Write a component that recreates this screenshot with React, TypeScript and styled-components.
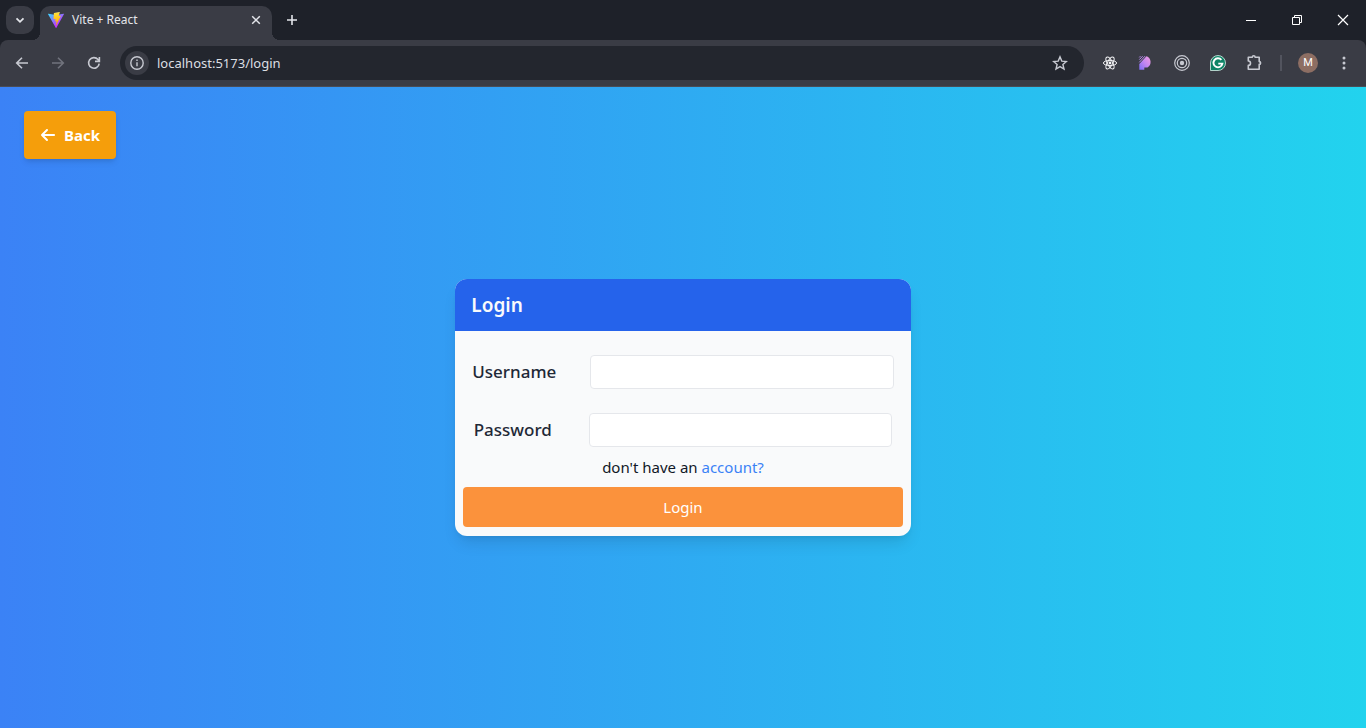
import React from "react";
import styled, { createGlobalStyle } from "styled-components";
import { FaArrowLeft } from "react-icons/fa6";

const GlobalStyle = createGlobalStyle`
  *, *::before, *::after { box-sizing: border-box; }
  body { margin: 0; font-family: "Segoe UI", "Noto Sans", "Open Sans", sans-serif; }
  button, input { font: inherit; color: inherit; }
  h1, p { margin: 0; }
`;

const Window = styled.div`
  display: flex;
  flex-direction: column;
  min-height: 100vh;
`;

const TabStrip = styled.header`
  display: flex;
  align-items: flex-end;
  height: 40px;
  padding-left: 6px;
  background: #1e2129;
  color: #e3e5ea;
`;

const TabSearch = styled.button`
  display: grid;
  place-items: center;
  width: 28px;
  height: 28px;
  margin: 0 6px 6px 0;
  padding: 0;
  border: 0;
  border-radius: 10px;
  background: #3a3c45;
`;

const Tab = styled.div`
  position: relative;
  display: flex;
  align-items: center;
  gap: 8px;
  width: 232px;
  height: 34px;
  padding: 0 8px 6px;
  border-radius: 10px 10px 0 0;
  background: #3a3c45;
  font-size: 12px;
  line-height: 16px;

  &::before, &::after {
    content: "";
    position: absolute;
    bottom: 0;
    width: 8px;
    height: 8px;
  }
  &::before {
    right: 100%;
    background: radial-gradient(circle at 0 0, transparent 8px, #3a3c45 8px);
  }
  &::after {
    left: 100%;
    background: radial-gradient(circle at 100% 0, transparent 8px, #3a3c45 8px);
  }
`;

const TabTitle = styled.span`
  flex: 1;
`;

const PlainButton = styled.button<{ $w: number; $h: number }>`
  display: grid;
  place-items: center;
  flex: none;
  width: ${(p) => p.$w}px;
  height: ${(p) => p.$h}px;
  padding: 0;
  border: 0;
  background: transparent;
`;

const NewTab = styled(PlainButton)`
  margin: 0 0 6px 6px;
`;

const WindowControls = styled.div`
  display: flex;
  align-self: flex-start;
  margin-left: auto;
  color: #fff;
`;

const ToolbarBack = styled.div`
  background: #1e2129;
`;

const Toolbar = styled.nav`
  display: flex;
  align-items: center;
  height: 47px;
  padding: 0 4px 1px;
  border-bottom: 1px solid #4a4c55;
  border-radius: 8px 8px 0 0;
  background: #3a3c45;
  color: #c7c9d1;
`;

const Omnibox = styled.div`
  display: flex;
  align-items: center;
  flex: 1;
  height: 34px;
  margin: 0 8px;
  padding: 0 6px 0 5px;
  border-radius: 17px;
  background: #23262e;
`;

const SiteInfo = styled(PlainButton)`
  border-radius: 50%;
  background: #3a3c45;
`;

const Address = styled.input`
  flex: 1;
  min-width: 0;
  padding: 0 8px;
  border: 0;
  outline: 0;
  background: transparent;
  color: #dcdee3;
  font-size: 13px;
  line-height: 20px;
`;

const Divider = styled.span`
  width: 2px;
  height: 16px;
  margin: 0 8px;
  background: #52545e;
`;

const Avatar = styled.span`
  display: grid;
  place-items: center;
  width: 20px;
  height: 20px;
  border-radius: 50%;
  background: #8d6e63;
  color: #fff;
  font-family: Roboto, sans-serif;
  font-size: 11px;
  line-height: 20px;
`;

const Page = styled.main`
  position: relative;
  display: flex;
  align-items: center;
  justify-content: center;
  flex: 1;
  background: linear-gradient(to right, #3b82f6, #22d3ee);
`;

const BackButton = styled.button`
  position: absolute;
  top: 24px;
  left: 24px;
  display: flex;
  align-items: center;
  gap: 8px;
  padding: 12px 16px;
  border: 0;
  border-radius: 4px;
  background: #f59e0b;
  box-shadow: 0 4px 6px -1px rgba(0, 0, 0, 0.1), 0 2px 4px -2px rgba(0, 0, 0, 0.1);
  color: #fff;
  font-size: 15px;
  font-weight: 700;
  line-height: 24px;
`;

const BackIcon = styled(FaArrowLeft)`
  width: 16px;
  height: 16px;
`;

const Card = styled.form`
  display: flex;
  flex-direction: column;
  width: calc(100% / 3);
  padding-bottom: 9px;
  overflow: hidden;
  border-radius: 12px;
  background: #f9fafb;
  box-shadow: 0 10px 15px -3px rgba(0, 0, 0, 0.1), 0 4px 6px -4px rgba(0, 0, 0, 0.1);
  color: #1f2937;
`;

const CardTitle = styled.h1`
  padding: 12px 16px;
  background: #2563eb;
  color: #f9fafb;
  font-size: 19px;
  font-weight: 600;
  line-height: 28px;
`;

const Fields = styled.div`
  display: flex;
  flex-direction: column;
  gap: 24px;
  padding: 24px 0 8px;
`;

const Field = styled.div`
  display: flex;
  align-items: center;
  justify-content: space-around;
`;

const Label = styled.label`
  font-size: 17px;
  font-weight: 500;
  line-height: 28px;
`;

const TextBox = styled.input`
  width: calc(100% * 2 / 3);
  height: 34px;
  padding: 4px 8px;
  border: 1px solid #e5e7eb;
  border-radius: 4px;
  background: #fff;
  font-size: 15px;
`;

const SignUpLine = styled.p`
  color: #111827;
  font-size: 15px;
  line-height: 24px;
  text-align: center;

  a {
    color: #3b82f6;
    text-decoration: none;
  }
`;

const SubmitButton = styled.button`
  margin: 8px 8px 0;
  padding: 8px;
  border: 0;
  border-radius: 4px;
  background: #fb923c;
  color: #fff;
  font-size: 15px;
  line-height: 24px;
`;

type IconProps = { size?: number; stroke?: number; children: React.ReactNode };

const Icon = ({ size = 16, stroke = 1.6, children }: IconProps) => (
  <svg width={size} height={size} viewBox={`0 0 ${size} ${size}`} fill="none" stroke="currentColor" strokeWidth={stroke} aria-hidden="true">
    {children}
  </svg>
);

const ViteLogo = () => (
  <svg width="16" height="16" viewBox="0 0 256 257" aria-hidden="true">
    <defs>
      <linearGradient id="viteBody" x1="-.8%" x2="57.6%" y1="7.7%" y2="78.4%">
        <stop offset="0%" stopColor="#41d1ff" />
        <stop offset="100%" stopColor="#bd34fe" />
      </linearGradient>
      <linearGradient id="viteBolt" x1="43.4%" x2="50.3%" y1="2.2%" y2="89%">
        <stop offset="0%" stopColor="#ffea83" />
        <stop offset="8.3%" stopColor="#ffdd35" />
        <stop offset="100%" stopColor="#ffa800" />
      </linearGradient>
    </defs>
    <path fill="url(#viteBody)" d="M255.153 37.938 134.897 252.976c-2.483 4.44-8.862 4.466-11.382.048L.875 37.958c-2.746-4.814 1.371-10.646 6.827-9.67l120.385 21.517a6.537 6.537 0 0 0 2.322-.004l117.867-21.483c5.438-.991 9.574 4.796 6.877 9.62Z" />
    <path fill="url(#viteBolt)" d="M185.432.063 96.44 17.501a3.268 3.268 0 0 0-2.634 3.014l-5.474 92.456a3.268 3.268 0 0 0 3.997 3.378l24.777-5.718c2.318-.535 4.413 1.507 3.936 3.838l-7.361 36.047c-.495 2.426 1.782 4.5 4.151 3.78l15.304-4.649c2.372-.72 4.652 1.36 4.15 3.788l-11.698 56.621c-.732 3.542 3.979 5.473 5.943 2.437l1.313-2.028 72.516-144.72c1.215-2.423-.88-5.186-3.54-4.672l-25.505 4.922c-2.396.462-4.435-1.77-3.759-4.114l16.646-57.705c.677-2.35-1.37-4.583-3.769-4.113Z" />
  </svg>
);

const ReactMark = () => (
  <svg width="16" height="16" viewBox="0 0 16 16" fill="none" stroke="#f4f4f6" strokeWidth="1" aria-hidden="true">
    <ellipse cx="8" cy="8" rx="6.6" ry="2.6" />
    <ellipse cx="8" cy="8" rx="6.6" ry="2.6" transform="rotate(60 8 8)" />
    <ellipse cx="8" cy="8" rx="6.6" ry="2.6" transform="rotate(120 8 8)" />
    <circle cx="8" cy="8" r="1.4" fill="#f4f4f6" stroke="none" />
  </svg>
);

const PestoMark = () => (
  <svg width="16" height="16" viewBox="0 0 16 16" aria-hidden="true">
    <defs>
      <linearGradient id="violetPink" x1="1" y1="0" x2="0" y2="1">
        <stop offset="0" stopColor="#f39be0" />
        <stop offset="0.5" stopColor="#c487f2" />
        <stop offset="1" stopColor="#7b6cf5" />
      </linearGradient>
    </defs>
    <path fill="url(#violetPink)" d="M1.300 9 8.500 1.200A6.300 6.300 0 0 1 9.500 12.500H6.300v2.300h-5Z" />
    <path stroke="#b98cf0" strokeWidth="1" d="M1.300 7.300 7 1.200M1.300 4.600 4.600 1.200M1.300 2.400 2.400 1.200" />
  </svg>
);

const GrammarlyMark = () => (
  <svg width="16" height="16" viewBox="0 0 16 16" aria-hidden="true">
    <path fill="#0e8466" stroke="#d7f0e8" strokeWidth=".8" d="M8 .5A7.5 7.5 0 1 1 8 15.5H.5V8A7.5 7.5 0 0 1 8 .5Z" />
    <path fill="none" stroke="#fff" strokeWidth="1.9" d="M11.4 4.9A4.5 4.5 0 1 0 12.4 8.6H8.3" />
  </svg>
);

const App = () => (
  <Window>
    <GlobalStyle />
    <TabStrip>
      <TabSearch type="button" aria-label="Search tabs">
        <Icon stroke={1.8}><path d="m4.5 6.3 3.5 3.5 3.5-3.5" /></Icon>
      </TabSearch>
      <Tab>
        <ViteLogo />
        <TabTitle>Vite + React</TabTitle>
        <PlainButton type="button" $w={16} $h={16} aria-label="Close tab">
          <Icon stroke={1.5}><path d="m4.2 4.2 7.6 7.6m0-7.6-7.6 7.6" /></Icon>
        </PlainButton>
      </Tab>
      <NewTab type="button" $w={28} $h={28} aria-label="New tab">
        <Icon><path d="M8 3v10M3 8h10" /></Icon>
      </NewTab>
      <WindowControls>
        <PlainButton type="button" $w={46} $h={40} aria-label="Minimize">
          <Icon stroke={1}><path d="M3 8.5h10" /></Icon>
        </PlainButton>
        <PlainButton type="button" $w={46} $h={40} aria-label="Restore">
          <Icon stroke={1}><path d="M3.5 5.5h7v7h-7ZM5.500 5.500v-2h7v7h-2" /></Icon>
        </PlainButton>
        <PlainButton type="button" $w={46} $h={40} aria-label="Close window">
          <Icon stroke={1.2}><path d="m3 3 10 10m0-10L3 13" /></Icon>
        </PlainButton>
      </WindowControls>
    </TabStrip>

    <ToolbarBack>
      <Toolbar>
        <PlainButton type="button" $w={36} $h={34} aria-label="Go back">
          <Icon><path d="M14 8H3m5-5.300L2.700 8 8 13.300" /></Icon>
        </PlainButton>
        <PlainButton type="button" $w={36} $h={34} aria-label="Go forward" disabled>
          <svg width="16" height="16" viewBox="0 0 16 16" fill="none" stroke="#71737d" strokeWidth="1.6" aria-hidden="true">
            <path d="M2 8h11M8 2.700 13.300 8 8 13.300" />
          </svg>
        </PlainButton>
        <PlainButton type="button" $w={36} $h={34} aria-label="Reload">
          <Icon><path d="M13.200 8.600A5.300 5.300 0 1 1 12 4.500l1.400 1.700M13.400 2v4.400H9" /></Icon>
        </PlainButton>
        <Omnibox>
          <SiteInfo type="button" $w={24} $h={24} aria-label="Site information">
            <Icon stroke={1.4}>
              <circle cx="8" cy="8" r="6.200" />
              <path d="M8 7.300v4M8 4.600v1.500" />
            </Icon>
          </SiteInfo>
          <Address aria-label="Address" defaultValue="localhost:5173/login" />
          <PlainButton type="button" $w={36} $h={34} aria-label="Bookmark this page">
            <Icon stroke={1.4}>
              <path d="m8 1.900 1.800 4.200 4.600.4-3.500 3 1.100 4.500L8 11.600 4 14l1.100-4.500-3.500-3 4.600-.4Z" />
            </Icon>
          </PlainButton>
        </Omnibox>
        <PlainButton type="button" $w={36} $h={34} aria-label="React Developer Tools"><ReactMark /></PlainButton>
        <PlainButton type="button" $w={36} $h={34} aria-label="Color extension"><PestoMark /></PlainButton>
        <PlainButton type="button" $w={36} $h={34} aria-label="Recorder extension">
          <Icon stroke={1.2}>
            <circle cx="8" cy="8" r="7.300" />
            <circle cx="8" cy="8" r="4.700" />
            <circle cx="8" cy="8" r="2.200" fill="currentColor" stroke="none" />
          </Icon>
        </PlainButton>
        <PlainButton type="button" $w={36} $h={34} aria-label="Grammarly"><GrammarlyMark /></PlainButton>
        <PlainButton type="button" $w={36} $h={34} aria-label="Extensions">
          <Icon size={18} stroke={1.600}>
            <path strokeLinejoin="round" d="M3.300 3.200h4a1.400 1.400 0 0 1 2.800 0h4.100v4.400a1.400 1.400 0 0 1 0 2.800v4.800H3.300v-3.800a2.200 2.200 0 0 0 0-4.400Z" />
          </Icon>
        </PlainButton>
        <Divider />
        <PlainButton type="button" $w={36} $h={34} aria-label="Profile"><Avatar>M</Avatar></PlainButton>
        <PlainButton type="button" $w={36} $h={34} aria-label="Browser menu">
          <svg width="16" height="16" viewBox="0 0 16 16" fill="currentColor" aria-hidden="true">
            <circle cx="8" cy="3" r="1.500" />
            <circle cx="8" cy="8" r="1.500" />
            <circle cx="8" cy="13" r="1.500" />
          </svg>
        </PlainButton>
      </Toolbar>
    </ToolbarBack>

    <Page>
      <BackButton type="button"><BackIcon aria-hidden="true" />Back</BackButton>
      <Card onSubmit={(e) => e.preventDefault()}>
        <CardTitle>Login</CardTitle>
        <Fields>
          <Field>
            <Label htmlFor="username">Username</Label>
            <TextBox id="username" type="text" autoComplete="username" />
          </Field>
          <Field>
            <Label htmlFor="password">Password</Label>
            <TextBox id="password" type="password" autoComplete="current-password" />
          </Field>
        </Fields>
        <SignUpLine>don't have an <a href="#register">account?</a></SignUpLine>
        <SubmitButton type="submit">Login</SubmitButton>
      </Card>
    </Page>
  </Window>
);

export default App;
